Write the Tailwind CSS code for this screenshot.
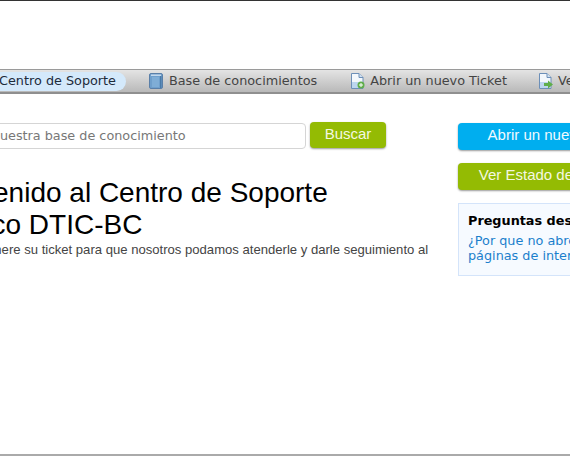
<!DOCTYPE html>
<html lang="en">
<head>
    <meta charset="UTF-8">
    <title>Centro de Soporte</title>
    <script src="https://cdn.jsdelivr.net/npm/@tailwindcss/browser@4"></script>
</head>
<body class="bg-white overflow-hidden font-['DejaVu_Sans',sans-serif]">
    <div class="w-[570px] h-[456px] overflow-hidden flex flex-col border-t border-t-[#333333] border-b-2 border-b-[#aaaaaa]">
        <!-- nav -->
        <nav class="mt-[68px] h-[25px] w-[760px] -ml-[40px] shrink-0 flex items-center border-t border-[#9a9a9a] border-b-2 border-b-[#8f8f8f] bg-gradient-to-b from-[#e4e4e4] to-[#b9b9b9] text-[12.8px] text-[#444444] whitespace-nowrap">
            <a class="ml-[6px] w-[160px] h-[19px] flex items-center justify-end pr-[10px] rounded-full bg-[#d4e9fb] text-[#1c2b3a]">Centro de Soporte</a>
            <a class="ml-[23px] flex items-center gap-[6px]">
                <svg width="14" height="16" viewBox="0 0 14 16"><rect x="0.5" y="0.5" width="13" height="15" rx="1.500" fill="#6f9fcc" stroke="#5a7fa8"/><rect x="2" y="1.500" width="10" height="1.500" fill="#c3d8ec"/><rect x="3" y="4" width="7" height="10" fill="#7fadd6"/><rect x="11" y="3" width="1.500" height="12" fill="#4a7aa8"/></svg>
                Base de conocimientos
            </a>
            <a class="ml-[33px] flex items-center gap-[5px]">
                <svg width="15" height="16" viewBox="0 0 15 16"><path d="M1.500.5H9L13 4.500V15.500H1.500Z" fill="#f2f7fc" stroke="#6c8fb8"/><path d="M9 .5V4.500H13" fill="#cfe0f2" stroke="#6c8fb8"/><path d="M2 9h10v6H2Z" fill="#bcd6ef"/><circle cx="11" cy="12" r="3.500" fill="#5fae4a"/><path d="M9 12h4M11 10v4" stroke="#fff"/></svg>
                Abrir un nuevo Ticket
            </a>
            <a class="ml-[31px] flex items-center gap-[5px]">
                <svg width="15" height="16" viewBox="0 0 15 16"><path d="M1.500.5H9L13 4.500V15.500H1.500Z" fill="#f2f7fc" stroke="#6c8fb8"/><path d="M9 .5V4.500H13" fill="#cfe0f2" stroke="#6c8fb8"/><path d="M2 9h10v6H2Z" fill="#bcd6ef"/><path d="M6 10h4V7.500L15 11.500 10 15.500V13H6Z" fill="#5fae4a"/></svg>
                Ver Estado de un Ticket
            </a>
        </nav>
        <!-- content -->
        <div class="flex w-[900px] -ml-[77px] pt-[29px]">
            <div class="w-[535px] shrink-0">
                <form class="flex gap-[4px] items-start -ml-[15px]">
                    <div class="w-[398px] h-[26px] pl-[11px] flex items-center border border-[#d5d5d5] rounded-[4px] text-[12.8px] text-[#777777] whitespace-nowrap">Busque en nuestra base de conocimiento</div>
                    <button type="button" class="w-[76px] h-[26px] pb-[2px] -mt-[1px] rounded-[4px] bg-[#94bb03] shadow-[0_1px_2px_rgba(0,0,0,0.4)] text-[#f4f8e0] text-[15px] font-['Liberation_Sans',sans-serif]">Buscar</button>
                </form>
                <h1 class="mt-[28px] text-[28px] leading-[32px] text-black font-['Liberation_Sans',sans-serif] whitespace-nowrap">Bienvenido al Centro de Soporte<br>Técnico DTIC-BC</h1>
                <p class="text-[13.1px] leading-[18px] text-[#444444] font-['Liberation_Sans',sans-serif] whitespace-nowrap">Por favor genere su ticket para que nosotros podamos atenderle y darle seguimiento al</p>
            </div>
            <aside class="w-[200px] shrink-0">
                <button type="button" class="block w-full h-[27px] pb-[2px] rounded-[4px] bg-[#00aeef] shadow-[0_1px_2px_rgba(0,0,0,0.4)] text-[#f0faff] text-[15px] font-['Liberation_Sans',sans-serif] whitespace-nowrap">Abrir un nuevo Ticket</button>
                <button type="button" class="block w-full h-[27px] pb-[2px] mt-[13px] rounded-[4px] bg-[#94bb03] shadow-[0_1px_2px_rgba(0,0,0,0.4)] text-[#f4f8e0] text-[15px] font-['Liberation_Sans',sans-serif] whitespace-nowrap">Ver Estado de un Ticket</button>
                <div class="mt-[13px] h-[73px] pl-[9px] pr-[4px] pt-[8px] bg-[#f6faff] border border-[#d4e4fa]">
                    <p class="text-[12.8px] leading-[18px] font-bold text-black whitespace-nowrap">Preguntas destacadas</p>
                    <a class="block mt-[3px] text-[12.8px] leading-[15px] text-[#1b7fcc]">¿Por que no abre ciertas páginas de internet?</a>
                </div>
            </aside>
        </div>
    </div>
</body>
</html>
